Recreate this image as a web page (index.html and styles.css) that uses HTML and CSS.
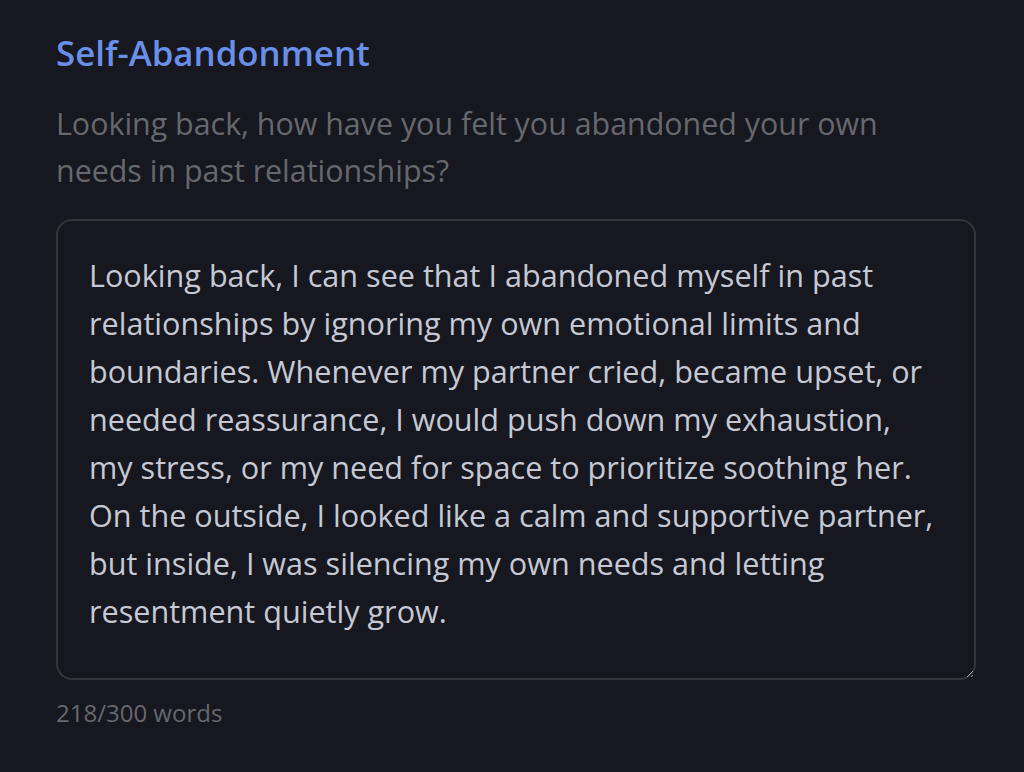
FILE: index.html
```html
<!DOCTYPE html>
<html lang="en">
<head>
<meta charset="utf-8">
<title>Self-Abandonment</title>
<link rel="stylesheet" href="styles.css">
</head>
<body>
<main class="entry">
  <h1 class="entry-title">Self-Abandonment</h1>
  <p class="entry-prompt">Looking back, how have you felt you abandoned your own needs in past relationships?</p>
  <textarea class="entry-answer" aria-label="Your answer">Looking back, I can see that I abandoned myself in past
relationships by ignoring my own emotional limits and
boundaries. Whenever my partner cried, became upset, or
needed reassurance, I would push down my exhaustion,
my stress, or my need for space to prioritize soothing her.
On the outside, I looked like a calm and supportive partner,
but inside, I was silencing my own needs and letting
resentment quietly grow.</textarea>
  <div class="entry-count">218/300 words</div>
</main>
</body>
</html>
```

FILE: styles.css
```css
html, body {
  margin: 0;
  padding: 0;
  background: #16171f;
}
body {
  font-family: "Open Sans", "Noto Sans", sans-serif;
  height: 772px;
  overflow: hidden;
}
.entry {
  padding: 30px 49px 0 56px;
  display: flex;
  flex-direction: column;
}
.entry-title {
  margin: 0;
  font-size: 34.8px;
  line-height: 46px;
  font-weight: 600;
  color: #6a8fe8;
}
.entry-prompt {
  margin: 24px 0 0;
  font-size: 30.4px;
  line-height: 47px;
  color: #67686d;
  width: 900px;
}
.entry-answer {
  margin-top: 25px;
  box-sizing: border-box;
  width: 920px;
  height: 461px;
  padding: 30px 12px 30px 31px;
  background: #16171f;
  border: 2px solid #35363b;
  border-radius: 16px;
  color: #c6c9d4;
  font-family: inherit;
  font-size: 30.6px;
  line-height: 48px;
  outline: none;
  resize: both;
  white-space: pre-wrap;
}
.entry-count {
  margin-top: 18px;
  font-size: 24px;
  line-height: 30px;
  color: #67686d;
}
```
